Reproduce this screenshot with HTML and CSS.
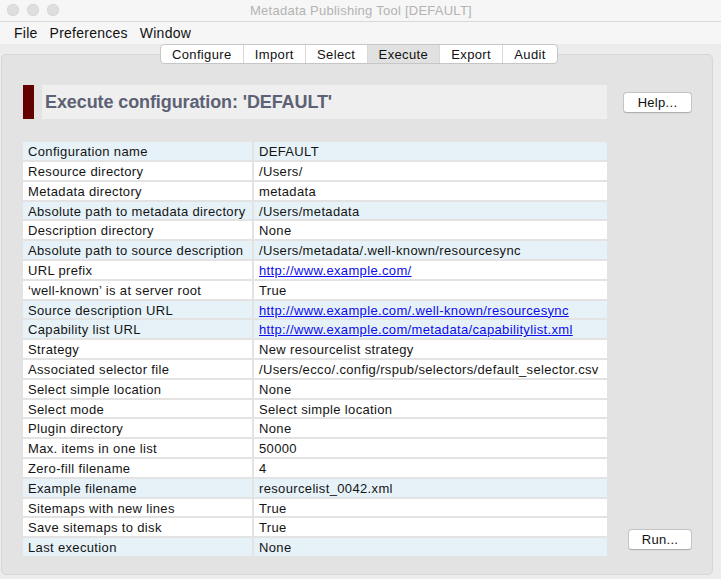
FILE: index.html
```html
<!DOCTYPE html>
<html>
<head>
<meta charset="utf-8">
<link rel="stylesheet" href="styles.css">
</head>
<body>
<div class="window">
  <div class="titlebar">
    <div class="lights"><span class="light"></span><span class="light"></span><span class="light"></span></div>
    <div class="title">Metadata Publishing Tool [DEFAULT]</div>
  </div>
  <div class="menubar">
    <span class="menu">File</span><span class="menu">Preferences</span><span class="menu">Window</span>
  </div>
  <div class="tabs">
    <span class="tab">Configure</span><span class="tab">Import</span><span class="tab">Select</span><span class="tab active">Execute</span><span class="tab">Export</span><span class="tab">Audit</span>
  </div>
  <div class="panel">
    <div class="left">
      <div class="heading">
        <div class="redbar"></div>
        <div class="headtext">Execute configuration: 'DEFAULT'</div>
      </div>
      <div class="table">
        <div class="c b">Configuration name</div><div class="c b">DEFAULT</div>
        <div class="c">Resource directory</div><div class="c">/Users/</div>
        <div class="c">Metadata directory</div><div class="c">metadata</div>
        <div class="c b">Absolute path to metadata directory</div><div class="c b">/Users/metadata</div>
        <div class="c">Description directory</div><div class="c">None</div>
        <div class="c b">Absolute path to source description</div><div class="c b">/Users/metadata/.well-known/resourcesync</div>
        <div class="c">URL prefix</div><div class="c"><a href="#">http://www.example.com/</a></div>
        <div class="c">‘well-known’ is at server root</div><div class="c">True</div>
        <div class="c b">Source description URL</div><div class="c b"><a href="#">http://www.example.com/.well-known/resourcesync</a></div>
        <div class="c b">Capability list URL</div><div class="c b"><a href="#">http://www.example.com/metadata/capabilitylist.xml</a></div>
        <div class="c">Strategy</div><div class="c">New resourcelist strategy</div>
        <div class="c">Associated selector file</div><div class="c">/Users/ecco/.config/rspub/selectors/default_selector.csv</div>
        <div class="c">Select simple location</div><div class="c">None</div>
        <div class="c">Select mode</div><div class="c">Select simple location</div>
        <div class="c">Plugin directory</div><div class="c">None</div>
        <div class="c">Max. items in one list</div><div class="c">50000</div>
        <div class="c">Zero-fill filename</div><div class="c">4</div>
        <div class="c b">Example filename</div><div class="c b">resourcelist_0042.xml</div>
        <div class="c">Sitemaps with new lines</div><div class="c">True</div>
        <div class="c">Save sitemaps to disk</div><div class="c">True</div>
        <div class="c b">Last execution</div><div class="c b">None</div>
      </div>
    </div>
    <div class="right">
      <button class="btn help">Help...</button>
      <button class="btn run">Run...</button>
    </div>
  </div>
</div>
</body>
</html>
```
FILE: styles.css
```css
html, body {
  margin: 0;
  padding: 0;
}
body {
  width: 721px;
  height: 579px;
  background: #ececec;
  font-family: "Liberation Sans", Arial, sans-serif;
  color: #141414;
  overflow: hidden;
}
.window {
  display: flex;
  flex-direction: column;
  height: 579px;
}
.titlebar {
  height: 21px;
  border-bottom: 1px solid #d9d9d9;
  background: #f6f6f6;
  display: flex;
  align-items: center;
}
.lights {
  display: flex;
  gap: 8px;
  padding-left: 7px;
}
.light {
  width: 12px;
  height: 12px;
  border-radius: 50%;
  background: #dedede;
  box-shadow: inset 0 0 0 0.5px #d0d0d0;
}
.title {
  flex: 1;
  text-align: center;
  font-size: 13px;
  letter-spacing: 0.25px;
  color: #b3b3b3;
  margin-right: 58px;
  padding-top: 1px;
}
.menubar {
  height: 21px;
  background: #f6f6f6;
  display: flex;
  align-items: center;
  padding-left: 14px;
  gap: 12px;
  font-size: 14px;
  letter-spacing: 0.25px;
  color: #111;
  padding-top: 1px;
}
.tabs {
  display: flex;
  margin-left: 160px;
  height: 21px;
  position: relative;
  z-index: 1;
  align-self: flex-start;
  border: 1px solid #c6c6c6;
  border-radius: 4px;
  background: #fff;
  box-sizing: border-box;
  overflow: hidden;
}
.tab {
  font-size: 13px;
  letter-spacing: 0.35px;
  padding: 0 11.3px 0 11px;
  line-height: 19px;
  border-left: 1px solid #d8d8d8;
  color: #111;
}
.tab:first-child {
  border-left: none;
}
.tab.active {
  background: #e1e1e1;
}
.panel {
  margin: -10px 8px 4px 1px;
  flex: 1;
  background: #e3e3e3;
  border: 1px solid #d6d6d6;
  border-radius: 5px;
  display: flex;
  padding: 30px 20px 18px 21px;
}
.left {
  width: 584px;
  display: flex;
  flex-direction: column;
}
.heading {
  display: flex;
  gap: 8px;
  height: 34px;
}
.redbar {
  width: 11px;
  background: #640000;
}
.headtext {
  flex: 1;
  background: #efefef;
  font-weight: bold;
  font-size: 18px;
  letter-spacing: -0.1px;
  color: #5c6173;
  line-height: 34px;
  padding-left: 3px;
}
.table {
  margin-top: 23px;
  display: grid;
  grid-template-columns: 229px 353px;
  grid-auto-rows: 17.8px;
  column-gap: 2px;
  row-gap: 2px;
}
.c {
  background: #ffffff;
  font-size: 13px;
  letter-spacing: 0.35px;
  line-height: 19.5px;
  padding-left: 5px;
  white-space: nowrap;
  overflow: hidden;
}
.c.b {
  background: #e6f2f8;
}
.c a {
  color: #0b0bee;
  text-decoration: underline;
}
.right {
  flex: 1;
  display: flex;
  flex-direction: column;
  align-items: flex-end;
  justify-content: space-between;
}
.btn {
  font-family: "Liberation Sans", Arial, sans-serif;
  font-size: 13px;
  letter-spacing: 0.3px;
  color: #111;
  background: #fff;
  border: 1px solid #c4c4c4;
  border-bottom-color: #b0b0b0;
  border-radius: 4px;
  height: 21px;
  padding: 0;
  box-shadow: 0 0.5px 0.5px rgba(0,0,0,0.08);
}
.help {
  width: 69px;
  margin-top: 7px;
}
.run {
  width: 64px;
  margin-bottom: 6px;
}
```
